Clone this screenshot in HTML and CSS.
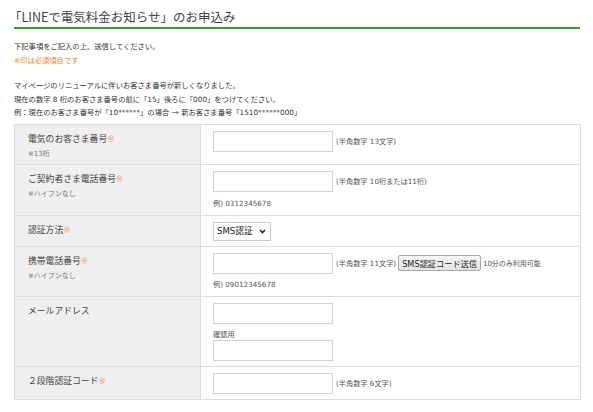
FILE: index.html
```html
<!DOCTYPE html>
<html lang="ja">
<head>
<meta charset="utf-8">
<title>LINEで電気料金お知らせ</title>
<link rel="stylesheet" href="styles.css">
</head>
<body>
<div class="page">
  <h1 class="title">「LINEで電気料金お知らせ」のお申込み</h1>
  <div class="intro">
    <p>下記事項をご記入の上、送信してください。</p>
    <p class="must">※印は必須項目です</p>
  </div>
  <div class="notice">
    <p>マイページのリニューアルに伴いお客さま番号が新しくなりました。</p>
    <p>現在の数字 8 桁のお客さま番号の前に「15」後ろに「000」をつけてください。</p>
    <p>例：現在のお客さま番号が「10******」の場合 <span class="arrow">→</span> 新お客さま番号「1510******000」</p>
  </div>
  <table class="form">
    <colgroup><col class="col-label"><col></colgroup>
    <tr>
      <th><div class="lab">電気のお客さま番号<span class="req">※</span></div><div class="sub">※13桁</div></th>
      <td><div class="line"><input class="txt" type="text"><span class="hint">(半角数字 13文字)</span></div></td>
    </tr>
    <tr>
      <th><div class="lab">ご契約者さま電話番号<span class="req">※</span></div><div class="sub">※ハイフンなし</div></th>
      <td><div class="line"><input class="txt" type="text"><span class="hint">(半角数字 10桁または11桁)</span></div><div class="ex">例) 0312345678</div></td>
    </tr>
    <tr>
      <th><div class="lab">認証方法<span class="req">※</span></div></th>
      <td class="sel-cell">
        <span class="sel-wrap">
          <select class="sel"><option>SMS認証</option></select>
          <svg class="chev" width="7" height="5" viewBox="0 0 7 5"><path d="M1 1 L3.5 3.6 L6 1" fill="none" stroke="#222" stroke-width="1.5"/></svg>
        </span>
      </td>
    </tr>
    <tr>
      <th><div class="lab">携帯電話番号<span class="req">※</span></div><div class="sub">※ハイフンなし</div></th>
      <td><div class="line"><input class="txt" type="text"><span class="hint">(半角数字 11文字)</span><button class="btn" type="button">SMS認証コード送信</button><span class="hint2">10分のみ利用可能</span></div><div class="ex ex2">例) 09012345678</div></td>
    </tr>
    <tr>
      <th><div class="lab">メールアドレス</div></th>
      <td><div class="line"><input class="txt" type="text"></div><div class="confirm">確認用</div><div class="line"><input class="txt" type="text"></div></td>
    </tr>
    <tr>
      <th><div class="lab">２段階認証コード<span class="req">※</span></div></th>
      <td><div class="line"><input class="txt" type="text"><span class="hint">(半角数字 6文字)</span></div></td>
    </tr>
  </table>
</div>
</body>
</html>
```

FILE: styles.css
```css
html, body {
  margin: 0;
  padding: 0;
  background: #ffffff;
}
body {
  font-family: "DejaVu Sans", "Noto Sans CJK JP", sans-serif;
  color: #333333;
}
.page {
  padding: 8px 13px 0 14px;
}
.title {
  margin: 0;
  font-family: "Noto Sans CJK JP", sans-serif;
  font-weight: normal;
  font-size: 12.5px;
  line-height: 18px;
  color: #444444;
  padding: 0 0 1px 0;
  text-indent: -5px;
  border-bottom: 2px solid #3c9a3c;
}
.intro, .notice {
  font-size: 7.3px;
}
.intro p, .notice p {
  margin: 0;
}
.intro {
  margin-top: 11px;
  line-height: 14px;
}
.must {
  color: #ef8533;
}
.notice {
  margin-top: 11px;
  line-height: 13.5px;
}
.arrow {
  font-family: "Noto Sans CJK JP", sans-serif;
}
.form {
  margin-top: 4px;
  width: 567px;
  border-collapse: collapse;
  table-layout: fixed;
  border: 1px solid #dddddd;
}
.col-label {
  width: 186px;
}
.form th, .form td {
  border: 1px solid #dddddd;
  vertical-align: top;
  text-align: left;
}
.form th {
  background: #efefef;
  font-weight: normal;
  padding: 6px 8px 3px 13px;
  color: #444444;
}
.form td {
  background: #ffffff;
  padding: 6px 8px 5px 12px;
}
.lab {
  font-size: 8.8px;
  line-height: 16px;
}
.req {
  color: #f5a47a;
}
.sub {
  font-size: 7px;
  line-height: 14px;
  color: #777777;
}
.line {
  display: flex;
  align-items: center;
}
.txt {
  box-sizing: border-box;
  width: 120px;
  height: 21px;
  margin: 0;
  padding: 0 4px;
  border: 1px solid #d4d4d4;
  border-radius: 0;
  background: #ffffff;
  font-size: 9px;
}
.hint {
  font-size: 7.2px;
  color: #555555;
  margin-left: 3px;
  white-space: nowrap;
}
.hint2 {
  font-size: 7px;
  color: #555555;
  margin-left: 2px;
  white-space: nowrap;
}
.btn {
  margin: 0 0 0 2px;
  height: 16px;
  padding: 0 3px;
  font-family: "DejaVu Sans", "Noto Sans CJK JP", sans-serif;
  font-size: 8.2px;
  color: #222222;
  background: linear-gradient(#f6f6f6, #e4e4e4);
  border: 1px solid #a9a9a9;
  border-radius: 2px;
  white-space: nowrap;
}
.ex {
  margin-top: 6px;
  font-size: 7.2px;
  line-height: 12px;
  color: #555555;
}
.ex2 {
  margin-top: 5px;
}
.sel-cell {
  padding-top: 5px;
}
.sel-wrap {
  position: relative;
  display: inline-block;
  vertical-align: top;
}
.sel {
  display: block;
  box-sizing: border-box;
  width: 58px;
  height: 19px;
  margin: 0;
  padding: 0 12px 0 3px;
  -webkit-appearance: none;
  appearance: none;
  font-family: "DejaVu Sans", "Noto Sans CJK JP", sans-serif;
  font-size: 8.6px;
  color: #222222;
  background: #ffffff;
  border: 1px solid #cccccc;
  border-radius: 0;
}
.chev {
  position: absolute;
  right: 5px;
  top: 7px;
  pointer-events: none;
}
.confirm {
  margin-top: 6px;
  font-size: 7.2px;
  line-height: 10px;
  color: #555555;
}
```
